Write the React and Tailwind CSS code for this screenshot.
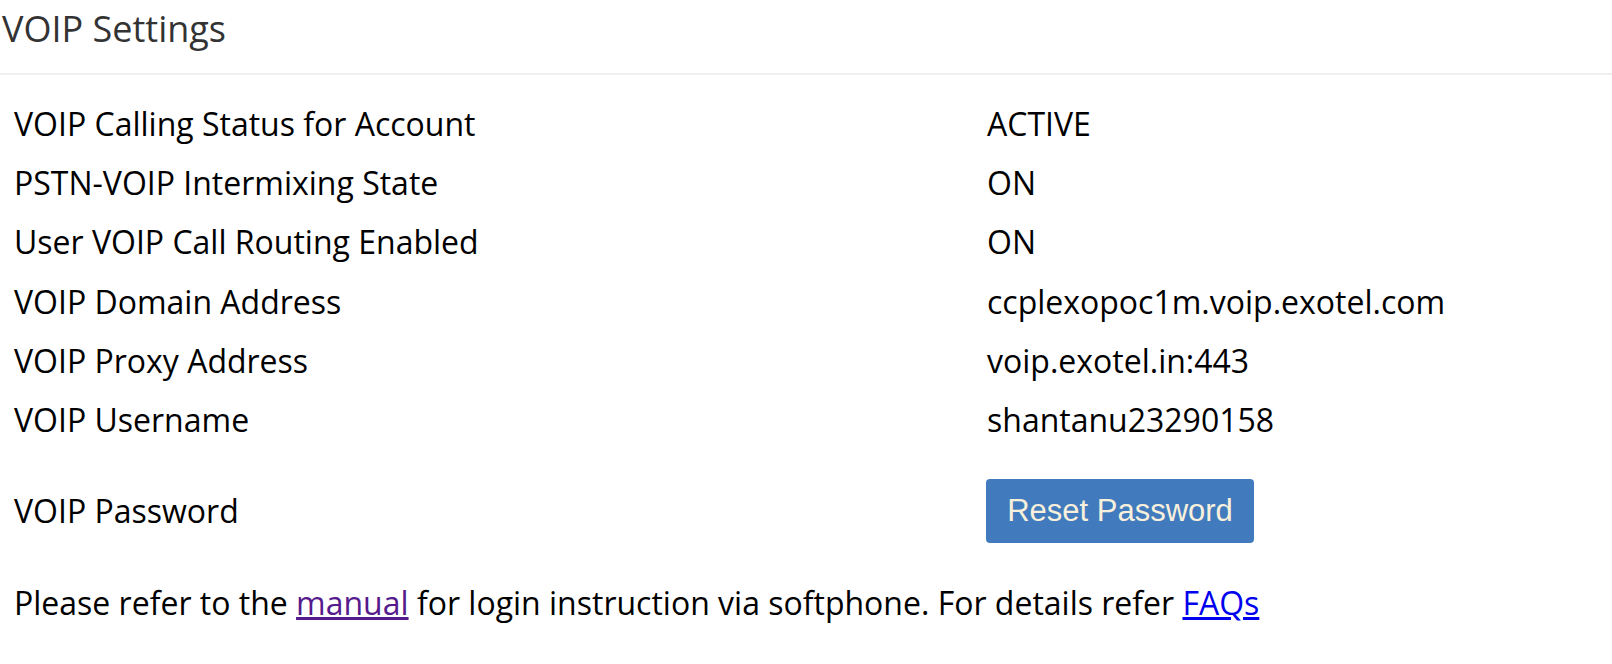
import React from 'react';

const rows = [
  { label: 'VOIP Calling Status for Account', value: 'ACTIVE' },
  { label: 'PSTN-VOIP Intermixing State', value: 'ON' },
  { label: 'User VOIP Call Routing Enabled', value: 'ON' },
  { label: 'VOIP Domain Address', value: 'ccplexopoc1m.voip.exotel.com' },
  { label: 'VOIP Proxy Address', value: 'voip.exotel.in:443' },
  { label: 'VOIP Username', value: 'shantanu23290158' },
];

const App = () => {
  return (
    <div className="min-h-screen bg-white font-['Open_Sans',sans-serif] text-black">
      {/* header */}
      <div className="h-[75px] border-b-2 border-[#efefef] pl-[2px] pt-[5px]">
        <h2 className="text-[36px] leading-[48px] text-[#333]">VOIP Settings</h2>
      </div>

      <div className="px-[14px] pt-[19px]">
        {rows.map((row) => (
          <div key={row.label} className="grid grid-cols-[973px_1fr] text-[32px] leading-[59.2px]">
            <div>{row.label}</div>
            <div>{row.value}</div>
          </div>
        ))}

        <div className="grid grid-cols-[972px_1fr] items-center py-[30px] text-[32px]">
          <div>VOIP Password</div>
          <div>
            <button
              type="button"
              className="h-[64px] w-[268px] rounded-[4px] bg-[#417bbd] font-['Liberation_Sans',Arial,sans-serif] text-[31px] text-[#f8f0dc]"
            >
              Reset Password
            </button>
          </div>
        </div>

        <p className="text-[32px] leading-[59.2px]">
          Please refer to the{' '}
          <a href="#manual" className="text-[#551a8b] underline">manual</a>{' '}
          for login instruction via softphone. For details refer{' '}
          <a href="#faqs" className="text-[#0000ee] underline">FAQs</a>
        </p>
      </div>
    </div>
  );
};

export default App;
